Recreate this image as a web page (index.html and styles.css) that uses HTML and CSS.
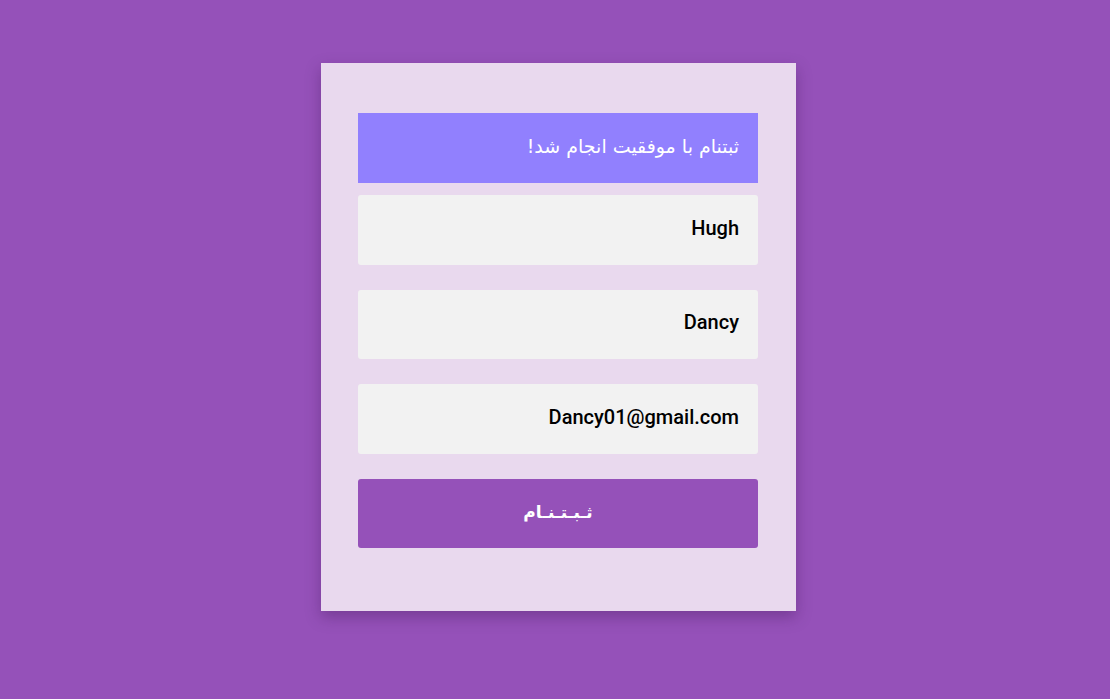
FILE: index.html
```html
<!DOCTYPE html>
<html lang="fa">
<head>
<meta charset="utf-8">
<link rel="stylesheet" href="styles.css">
</head>
<body>
<main class="page">
  <form class="card" dir="rtl">
    <div class="success">ثبتنام با موفقیت انجام شد!</div>
    <div class="field first"><span class="value">Hugh</span></div>
    <div class="field"><span class="value">Dancy</span></div>
    <div class="field"><span class="value">Dancy01@gmail.com</span></div>
    <button type="button" class="submit">ثـبـتـنـام</button>
  </form>
</main>
</body>
</html>
```

FILE: styles.css
```css
html, body {
  margin: 0;
  padding: 0;
  height: 100%;
}
body {
  background: #9551b9;
  font-family: Roboto, "Noto Sans", "DejaVu Sans", sans-serif;
}
.page {
  display: flex;
  justify-content: center;
  padding-top: 63px;
  padding-left: 7px;
}
.card {
  width: 475px;
  box-sizing: border-box;
  padding: 50px 38px 63px 37px;
  background: #e9d9ee;
  box-shadow: 0 6px 14px rgba(60, 20, 80, 0.35);
  display: flex;
  flex-direction: column;
}
.success {
  height: 70px;
  box-sizing: border-box;
  background: #9180fe;
  color: #ffffff;
  font-family: "DejaVu Sans", "Noto Sans", sans-serif;
  font-size: 19px;
  display: flex;
  align-items: center;
  padding: 0 19px 4px;
  margin-bottom: 12px;
}
.field {
  height: 70px;
  box-sizing: border-box;
  background: #f2f2f2;
  border-radius: 3px;
  display: flex;
  align-items: center;
  padding: 0 19px 5px;
  margin-bottom: 25px;
}
.field:nth-of-type(3) {
  height: 69px;
}
.value {
  font-size: 20px;
  font-weight: 500;
  color: #000;
}
.submit {
  height: 69px;
  border: none;
  border-radius: 3px;
  background: #9551b9;
  color: #ffffff;
  font-family: "DejaVu Sans", "Noto Sans", sans-serif;
  font-size: 17px;
  font-weight: bold;
  padding: 0 0 4px;
}
```
